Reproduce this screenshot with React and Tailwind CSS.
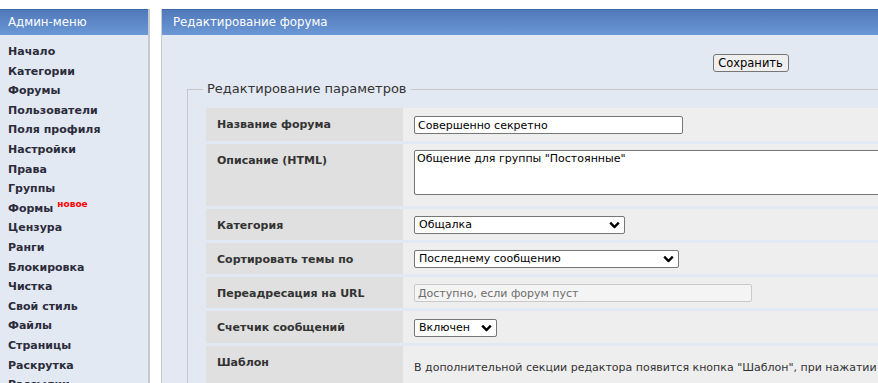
import { useState } from "react";

const menu = [
    "Начало",
    "Категории",
    "Форумы",
    "Пользователи",
    "Поля профиля",
    "Настройки",
    "Права",
    "Группы",
    "Формы",
    "Цензура",
    "Ранги",
    "Блокировка",
    "Чистка",
    "Свой стиль",
    "Файлы",
    "Страницы",
    "Раскрутка",
    "Рассылки",
];

function Chevron() {
    return (
        <svg
            className="pointer-events-none absolute right-[5px] top-1/2 -translate-y-1/2"
            width="11"
            height="7"
            viewBox="0 0 11 7"
        >
            <path d="M1.2 1.2l4.3 4.3 4.3-4.3" fill="none" stroke="#000" strokeWidth="2.4" />
        </svg>
    );
}

function Select({ width, value, options }) {
    const [val, setVal] = useState(value);
    return (
        <div className="relative block" style={{ width }}>
            <select
                value={val}
                onChange={(e) => setVal(e.target.value)}
                className="block w-full h-[18px] appearance-none border border-[#767676] rounded-[2px] bg-white pl-[4px] text-[11px] leading-[16px] text-black outline-none"
            >
                {options.map((o) => (
                    <option key={o}>{o}</option>
                ))}
            </select>
            <Chevron />
        </div>
    );
}

function Row({ label, children, cellClass = "pt-[8px] pb-[7px]" }) {
    return (
        <tr>
            <td className="w-[197px] min-w-[197px] bg-[#dfe0df] align-top pl-[11px] pt-[9px] text-[11px] leading-[15px] font-bold text-[#333]">
                {label}
            </td>
            <td className={`bg-[#eeeeee] align-top pl-[11px] ${cellClass}`}>
                {children}
            </td>
        </tr>
    );
}

export default function App() {
    return (
        <div
            className="flex h-[383px] w-[878px] overflow-hidden bg-white pt-[9px]"
            style={{ fontFamily: '"DejaVu Sans", Verdana, sans-serif' }}
        >
            <aside className="w-[150px] shrink-0 bg-[#e3e9f2] border-r-2 border-[#c6cad0]">
                <div className="h-[26px] border-t border-[#4069ab] bg-gradient-to-b from-[#5079b9] to-[#6b98d6] pl-[8px] text-[11.8px] leading-[24px] text-white">
                    Админ-меню
                </div>
                <ul className="pt-[7px] pl-[8px]">
                    {menu.map((m) => (
                        <li
                            key={m}
                            className="text-[11px] leading-[19.6px] font-bold text-[#2c2c3c]"
                        >
                            {m}
                            {m === "Формы" && (
                                <sup className="ml-[4px] text-[9px] font-bold text-[#ff0000]">
                                    новое
                                </sup>
                            )}
                        </li>
                    ))}
                </ul>
            </aside>

            <main className="ml-[11px] w-[1178px] shrink-0 bg-[#e3e9f2] border-l border-[#c8ccd2]">
                <div className="h-[26px] border-t border-[#4069ab] bg-gradient-to-b from-[#5079b9] to-[#6b98d6] pl-[11px] text-[11.8px] leading-[24px] text-white">
                    Редактирование форума
                </div>

                <div className="flex justify-center pt-[19px]">
                    <button className="h-[18px] w-[76px] border border-[#767676] rounded-[3px] bg-[#efefef] text-[11.5px] leading-[14px] text-black">
                        Сохранить
                    </button>
                </div>

                <fieldset className="mt-[9px] ml-[25px] mr-[25px] border border-[#c8c8c8] px-[15px] pb-[10px]">
                    <legend className="px-[4px] text-[13px] leading-[16px] text-[#333]">
                        Редактирование параметров
                    </legend>
                    <table className="ml-[3px] w-[1000px] border-separate border-spacing-x-0 border-spacing-y-[3px] mt-[8px]">
                        <tbody>
                            <Row label="Название форума">
                                <input
                                    defaultValue="Совершенно секретно"
                                    className="block w-[269px] h-[18px] border border-[#767676] rounded-[2px] bg-white px-[3px] text-[11px] text-black outline-none"
                                />
                            </Row>
                            <Row label="Описание (HTML)" cellClass="pt-[6px] pb-[11px]">
                                <textarea
                                    defaultValue={'Общение для группы "Постоянные"'}
                                    className="block w-[700px] h-[45px] resize-none border border-[#767676] rounded-[2px] bg-white px-[2px] py-[1px] text-[11px] leading-[14px] text-black outline-none"
                                />
                            </Row>
                            <Row label="Категория" cellClass="pt-[7px] pb-[6px]">
                                <Select width="211px" value="Общалка" options={["Общалка"]} />
                            </Row>
                            <Row label="Сортировать темы по" cellClass="pt-[7px] pb-[6px]">
                                <Select
                                    width="265px"
                                    value="Последнему сообщению"
                                    options={["Последнему сообщению"]}
                                />
                            </Row>
                            <Row label="Переадресация на URL" cellClass="pt-[7px] pb-[6px]">
                                <input
                                    disabled
                                    placeholder="Доступно, если форум пуст"
                                    className="block w-[338px] h-[18px] border border-[#c9c9c9] rounded-[2px] bg-[#f4f4f4] px-[3px] text-[11px] text-[#6d6d6d] placeholder:text-[#6d6d6d] outline-none"
                                />
                            </Row>
                            <Row label="Счетчик сообщений" cellClass="pt-[8px] pb-[6px]">
                                <Select width="83px" value="Включен" options={["Включен", "Выключен"]} />
                            </Row>
                            <Row label="Шаблон" cellClass="pt-[12px] pb-[8px]">
                                <p className="text-[11px] leading-[20px] text-[#333]">
                                    В дополнительной секции редактора появится кнопка "Шаблон", при нажатии на которую в поле ввода будет вставлен текст, указанный
                                    ниже. Если добавите тег [cursor], то в это место будет установлен курсор пользователя.
                                </p>
                            </Row>
                        </tbody>
                    </table>
                </fieldset>
            </main>
        </div>
    );
}
